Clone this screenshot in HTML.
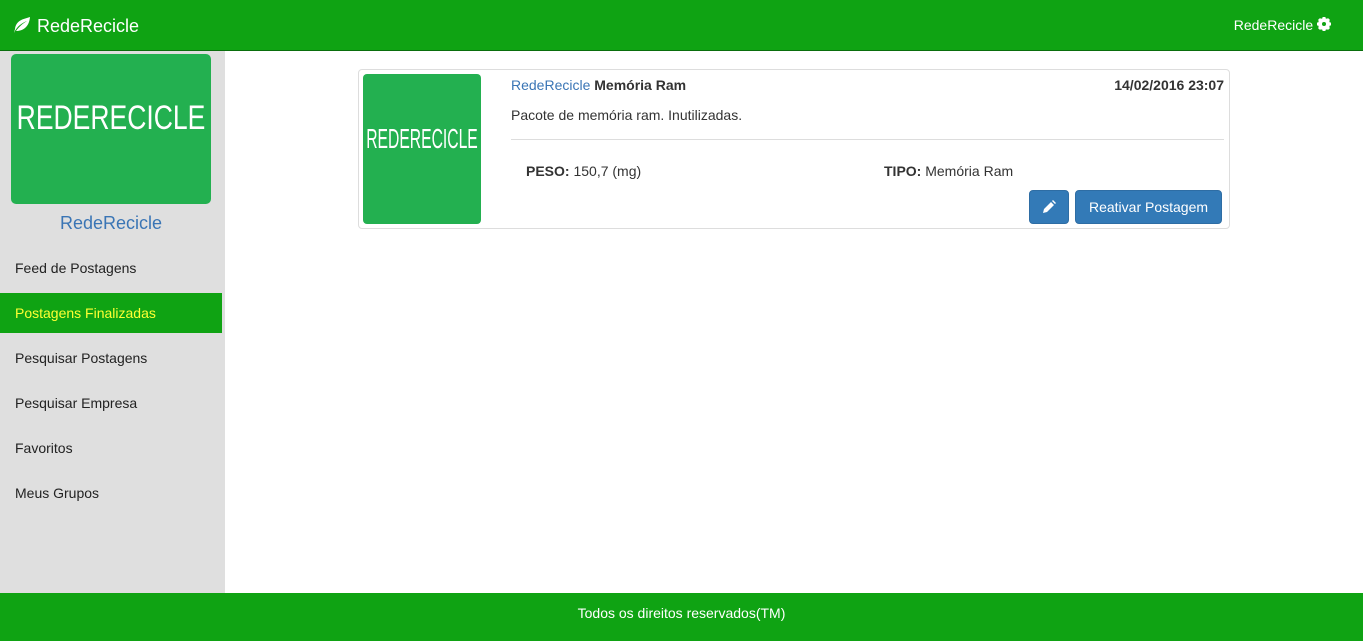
<!DOCTYPE html>
<html><head><meta charset="utf-8"><style>
*{box-sizing:border-box;margin:0;padding:0}
body{width:1363px;height:641px;overflow:hidden;font-family:"Liberation Sans",Arial,sans-serif;font-size:14px;color:#333;background:#fff;position:relative}
.top{position:absolute;left:0;top:0;width:1363px;height:51px;background:#0fa313;border-bottom:1px solid #0a6e0d;color:#fff}
.brand{position:absolute;left:12px;top:16px;font-size:18px}
.user{position:absolute;right:32px;top:17px;font-size:14px}
.side{position:absolute;left:0;top:51px;width:225px;height:542px;background:#dfdfdf}
.logo{position:absolute;left:11px;top:3px;width:200px;height:150px;background:#23b050;border-radius:5px;color:#fff;overflow:hidden}
.logo span,.img span{position:absolute;left:50%;white-space:nowrap;line-height:1}
.logo span{top:47px;font-size:34px;transform:translateX(-50%) scaleX(0.78)}
.name{position:absolute;left:0;width:222px;top:162px;text-align:center;color:#3a75b5;font-size:18px}
.nav{position:absolute;left:0;top:197px;width:222px}
.nav div{height:40px;line-height:40px;padding-left:15px;margin-bottom:5px;color:#222}
.nav .act{background:#0fa313;color:#ffff33}
.foot{position:absolute;left:0;top:593px;width:1363px;height:48px;background:#0fa313;color:#fff;text-align:center;line-height:40px}
.card{position:absolute;left:358px;top:69px;width:872px;height:160px;border:1px solid #ddd;border-radius:4px}
.img{position:absolute;left:4px;top:4px;width:118px;height:150px;background:#23b050;border-radius:4px;color:#fff;overflow:hidden}
.img span{top:51px;font-size:28px;transform:translateX(-50%) scaleX(0.56)}
.t{position:absolute;left:152px;top:7px}
.d{position:absolute;right:5px;top:7px;font-weight:bold}
.desc{position:absolute;left:152px;top:37px}
.hr{position:absolute;left:152px;right:5px;top:69px;border-top:1px solid #ddd}
.btn{position:absolute;top:120px;height:34px;background:#337ab7;border:1px solid #2e6da4;border-radius:4px;color:#fff;line-height:32px;text-align:center}
</style></head><body>
<div class="top"><div class="brand"><svg width="20" height="16" viewBox="0 0 20 16" style="vertical-align:-1px"><path d="M2 16 C5 9 10 6 15 4 C10 7 7 10 4 14 C10 14 17 11 18 0 C12 2 4 3 3 12 Z" fill="#fff"/></svg> RedeRecicle</div>
<div class="user">RedeRecicle <svg width="14" height="14" viewBox="0 0 14 14" style="vertical-align:-1px"><circle cx="7" cy="7" r="4.5" fill="none" stroke="#fff" stroke-width="3"/><g stroke="#fff" stroke-width="3"><path d="M7 0v14M0 7h14M2 2l10 10M12 2L2 12"/></g><circle cx="7" cy="7" r="2" fill="#0fa313"/></svg></div></div>
<div class="side"><div class="logo"><span>REDERECICLE</span></div><div class="name">RedeRecicle</div>
<div class="nav"><div>Feed de Postagens</div><div class="act">Postagens Finalizadas</div><div>Pesquisar Postagens</div><div>Pesquisar Empresa</div><div>Favoritos</div><div>Meus Grupos</div></div></div>
<div class="card"><div class="img"><span>REDERECICLE</span></div>
<div class="t"><span style="color:#3a75b5">RedeRecicle</span> <b>Memória Ram</b></div>
<div class="d">14/02/2016 23:07</div>
<div class="desc">Pacote de memória ram. Inutilizadas.</div>
<div class="hr"></div>
<div style="position:absolute;left:167px;top:93px"><b>PESO:</b> 150,7 (mg)</div>
<div style="position:absolute;left:525px;top:93px"><b>TIPO:</b> Memória Ram</div>
<div class="btn" style="left:670px;width:40px"><svg width="14" height="14" viewBox="0 0 14 14" style="vertical-align:-2px"><path d="M1 13l1-4 7-7 3 3-7 7z M10 1l1-1 3 3-1 1z" fill="#fff"/></svg></div>
<div class="btn" style="left:716px;width:147px">Reativar Postagem</div>
</div>
<div class="foot">Todos os direitos reservados(TM)</div>
</body></html>
